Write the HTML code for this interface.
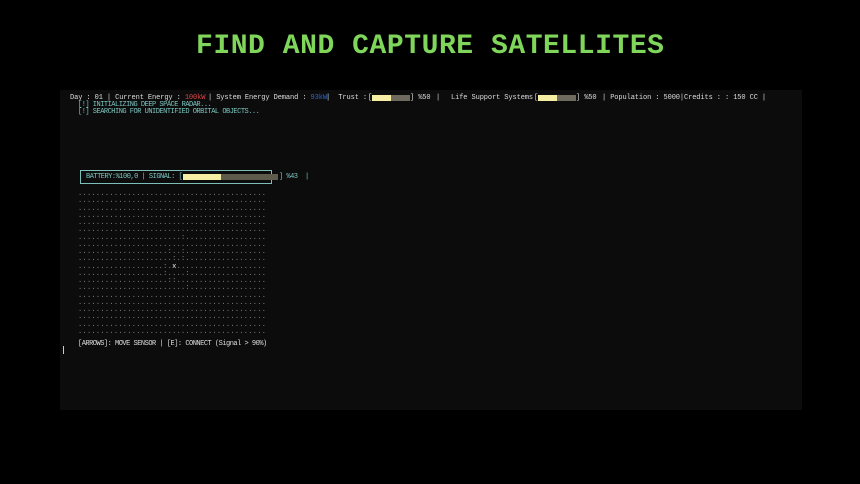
<!DOCTYPE html>
<html><head><meta charset="utf-8"><style>
body{margin:0;width:860px;height:484px;background:#000;overflow:hidden;position:relative;font-family:"Liberation Mono",monospace}
.t{position:absolute;left:196px;top:31px;font-size:28px;font-weight:bold;color:#7fd65a;letter-spacing:0.55px;white-space:nowrap}
.panel{position:absolute;left:60px;top:90px;width:742px;height:320px;background:#0c0c0c}
.s{position:absolute;font-size:7px;color:#ddd;white-space:pre;line-height:8px;letter-spacing:-0.1px}
.n{letter-spacing:-0.5px}
.c{color:#7cc6c0}
.b{position:absolute;height:6px;background:#6f6a5e}
.b i{display:block;height:6px;background:#f6eea2}
pre{margin:0;position:absolute;left:78px;top:191px;font-size:7px;line-height:7.25px;color:#888;font-family:"Liberation Mono",monospace;letter-spacing:0.28px}
</style></head><body>
<div class="t">FIND AND CAPTURE SATELLITES</div>
<div class="panel"></div>
<div class="s" style="left:70px;top:94px">Day : 01 | Current Energy : <span style="color:#d44">100kW</span></div>
<div class="s" style="left:208px;top:94px">| System Energy Demand : <span style="color:#36c">93kW</span></div>
<div class="s" style="left:326px;top:94px">|  Trust :</div>
<div class="s" style="left:368px;top:94px">[</div>
<div class="b" style="left:372px;top:95px;width:38px"><i style="width:19px"></i></div>
<div class="s" style="left:410px;top:94px">] %50</div>
<div class="s" style="left:436px;top:94px">|</div>
<div class="s" style="left:451px;top:94px">Life Support Systems</div>
<div class="s" style="left:534px;top:94px">[</div>
<div class="b" style="left:538px;top:95px;width:38px"><i style="width:19px"></i></div>
<div class="s" style="left:576px;top:94px">] %50</div>
<div class="s" style="left:602px;top:94px">| Population : 5000|</div>
<div class="s" style="left:684px;top:94px">Credits : : 150 CC |</div>
<div class="s c n" style="left:78px;top:101px">[!] INITIALIZING DEEP SPACE RADAR...</div>
<div class="s c n" style="left:78px;top:108px">[!] SEARCHING FOR UNIDENTIFIED ORBITAL OBJECTS...</div>
<div style="position:absolute;left:80px;top:170px;width:190px;height:12px;border:1px solid #7cbfb8"></div>
<div class="s c n" style="left:86px;top:173px">BATTERY:%100,0 | SIGNAL: [</div>
<div class="b" style="left:183px;top:174px;width:95px;background:#5e5a4c"><i style="width:38px"></i></div>
<div class="s c n" style="left:279px;top:173px">] %43</div>
<div class="s c" style="left:305px;top:173px">|</div>
<pre>..........................................
..........................................
..........................................
..........................................
..........................................
..........................................
.......................:..................
..........................................
....................:..:..................
.....................:.:..................
...................:.<span style="color:#eee">x</span>....................
...................:....:.................
....................::....................
........................:.................
..........................................
..........................................
..........................................
..........................................
..........................................
..........................................</pre>
<div class="s n" style="left:78px;top:340px">[ARROWS]: MOVE SENSOR | [E]: CONNECT (Signal &gt; 90%)</div>
<div style="position:absolute;left:63px;top:346px;width:1px;height:8px;background:#ccc"></div>
</body></html>
